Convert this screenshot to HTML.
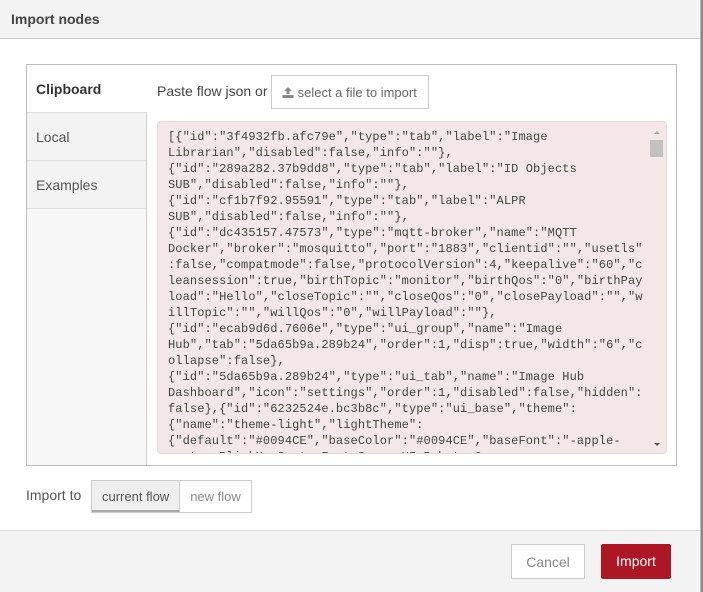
<!DOCTYPE html>
<html><head><meta charset="utf-8"><style>
*{box-sizing:border-box;margin:0;padding:0}
body{width:703px;height:592px;overflow:hidden;background:#888;font-family:"Liberation Sans",sans-serif;font-size:14px;color:#555;position:relative}
.dlg{position:absolute;left:0;top:0;width:701px;height:592px;background:#fff;border-right:1px solid #bbb}
.hdr{position:absolute;left:0;top:0;width:700px;height:39px;background:#f3f3f3;border-bottom:1px solid #ccc;font-weight:bold;color:#444;font-size:14px;padding:11px 0 0 11px}
.panel{position:absolute;left:26px;top:64px;width:651px;height:402px;border:1px solid #bbb}
.tabs{position:absolute;left:0;top:0;width:120px;height:400px;background:#f7f7f7;border-right:1px solid #ccc}
.tab{height:48px;border-bottom:1px solid #ddd;background:#f3f3f3;padding:16px 0 0 9px;color:#555}
.tab.on{background:#fff;font-weight:bold;color:#333;margin-right:-1px}
.paste{position:absolute;left:130px;top:18px;color:#444}
.fbtn{position:absolute;left:244px;top:10px;width:158px;height:34px;border:1px solid #ccc;background:#fff;color:#666;padding:9px 0 0 10px;font-size:13px}
.ta{position:absolute;left:130px;top:56px;width:510px;height:333px;background:#f5e7e7;border:1px solid #ddd;border-radius:4px;overflow:hidden;font-family:"Liberation Mono",monospace;font-size:12px;letter-spacing:0.1px;line-height:16px;color:#444;padding:7px 0 0 10px;white-space:pre}
.sb{position:absolute;right:2px;top:2px;width:16px;height:328px}
.thumb{position:absolute;left:1px;top:17px;width:13px;height:17px;background:#c1c1c1}
.imp{position:absolute;left:26px;top:487px;color:#555}
.grp{position:absolute;left:91px;top:480px;height:33px;border:1px solid #ccc;display:flex;font-size:13px}
.grp div{padding:8px 10px 0 10px;color:#888}
.grp .on{background:#efefef;border-right:1px solid #ccc;color:#555;border-bottom:2px solid #aaa}
.ftr{position:absolute;left:0;top:530px;width:700px;height:62px;background:#f3f3f3;border-top:1px solid #ddd}
.cancel{position:absolute;left:511px;top:544px;width:74px;height:35px;border:1px solid #ccc;background:#fff;color:#888;text-align:center;padding-top:9px}
.ok{position:absolute;left:601px;top:544px;width:70px;height:35px;background:#ad1625;color:#fff;text-align:center;padding-top:9px;border-radius:2px}
</style></head><body>
<div class="dlg">
<div class="hdr">Import nodes</div>
<div class="panel">
<div class="tabs"><div class="tab on">Clipboard</div><div class="tab">Local</div><div class="tab">Examples</div></div>
<div class="paste">Paste flow json or</div>
<div class="fbtn"><svg width="12" height="12" viewBox="0 0 12 12" style="vertical-align:-1px"><path d="M6 1L2 5h2.5v3h3V5H10z" fill="#888"/><rect x="0.5" y="9" width="11" height="3" fill="#888"/></svg> select a file to import</div>
<div class="ta">[{"id":"3f4932fb.afc79e","type":"tab","label":"Image
Librarian","disabled":false,"info":""},
{"id":"289a282.37b9dd8","type":"tab","label":"ID Objects
SUB","disabled":false,"info":""},
{"id":"cf1b7f92.95591","type":"tab","label":"ALPR
SUB","disabled":false,"info":""},
{"id":"dc435157.47573","type":"mqtt-broker","name":"MQTT
Docker","broker":"mosquitto","port":"1883","clientid":"","usetls"
:false,"compatmode":false,"protocolVersion":4,"keepalive":"60","c
leansession":true,"birthTopic":"monitor","birthQos":"0","birthPay
load":"Hello","closeTopic":"","closeQos":"0","closePayload":"","w
illTopic":"","willQos":"0","willPayload":""},
{"id":"ecab9d6d.7606e","type":"ui_group","name":"Image
Hub","tab":"5da65b9a.289b24","order":1,"disp":true,"width":"6","c
ollapse":false},
{"id":"5da65b9a.289b24","type":"ui_tab","name":"Image Hub
Dashboard","icon":"settings","order":1,"disabled":false,"hidden":
false},{"id":"6232524e.bc3b8c","type":"ui_base","theme":
{"name":"theme-light","lightTheme":
{"default":"#0094CE","baseColor":"#0094CE","baseFont":"-apple-
system,BlinkMacSystemFont,Segoe UI,Roboto,Oxygen</div>
<div style="position:absolute;left:130px;top:56px;width:510px;height:333px;pointer-events:none"><div class="sb"><svg width="16" height="12" style="position:absolute;top:3px"><path d="M5 8l3-3 3 3z" fill="#aaa"/></svg><div class="thumb"></div><svg width="16" height="12" style="position:absolute;bottom:0"><path d="M5 4l3 3 3-3z" fill="#555"/></svg></div></div>
</div>
<div class="imp">Import to</div>
<div class="grp"><div class="on">current flow</div><div>new flow</div></div>
<div class="ftr"></div>
<div class="cancel">Cancel</div>
<div class="ok">Import</div>
</div>
</body></html>
